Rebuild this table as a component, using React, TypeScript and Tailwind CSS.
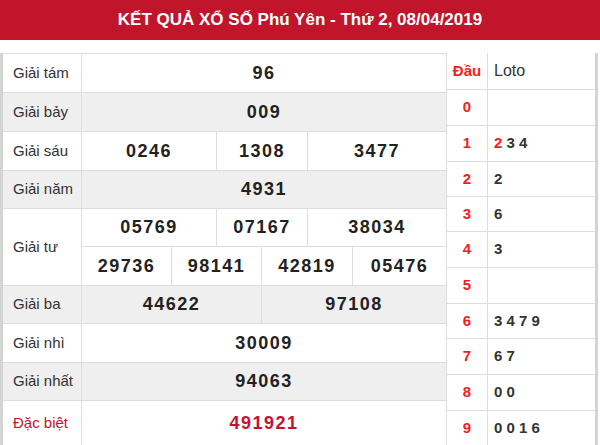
import React from 'react';

type Cell = { value: string; w?: string };
type Row = { label: string; h: string; cells: Cell[]; gray?: boolean; special?: boolean };

const font = { fontFamily: '"Liberation Sans", Arial, sans-serif' };

const ROWS: Row[] = [
  { label: 'Giải tám', h: 'h-[39px]', cells: [{ value: '96' }] },
  { label: 'Giải bảy', h: 'h-[39px]', cells: [{ value: '009' }], gray: true },
  {
    label: 'Giải sáu',
    h: 'h-[39px]',
    cells: [
      { value: '0246', w: 'w-[135px]' },
      { value: '1308', w: 'w-[91px]' },
      { value: '3477' },
    ],
  },
  { label: 'Giải năm', h: 'h-[38px]', cells: [{ value: '4931' }], gray: true },
];

const ROWS_AFTER: Row[] = [
  {
    label: 'Giải ba',
    h: 'h-[38px]',
    cells: [
      { value: '44622', w: 'w-[180px]' },
      { value: '97108' },
    ],
    gray: true,
  },
  { label: 'Giải nhì', h: 'h-[39px]', cells: [{ value: '30009' }] },
  { label: 'Giải nhất', h: 'h-[38px]', cells: [{ value: '94063' }], gray: true },
  { label: 'Đặc biệt', h: 'h-[45px]', cells: [{ value: '491921' }], special: true },
];

const LOTO = [
  { dau: '0', h: 'h-[36px]', nums: [] as string[] },
  { dau: '1', h: 'h-[36px]', nums: ['2', '3', '4'], redFirst: true },
  { dau: '2', h: 'h-[35px]', nums: ['2'] },
  { dau: '3', h: 'h-[35px]', nums: ['6'] },
  { dau: '4', h: 'h-[36px]', nums: ['3'] },
  { dau: '5', h: 'h-[36px]', nums: [] },
  { dau: '6', h: 'h-[35px]', nums: ['3', '4', '7', '9'] },
  { dau: '7', h: 'h-[36px]', nums: ['6', '7'] },
  { dau: '8', h: 'h-[36px]', nums: ['0', '0'] },
  { dau: '9', h: 'h-[35px]', nums: ['0', '0', '1', '6'] },
];

function Value({ v, w, last, special }: { v: string; w?: string; last?: boolean; special?: boolean }) {
  return (
    <div
      className={`${w ?? 'flex-1'} flex items-center justify-center text-[18px] font-bold tracking-[1.5px] ${
        last ? '' : 'border-r border-[#dddddd]'
      } ${special ? 'text-[#c8102e]' : 'text-[#222222]'}`}
    >
      {v}
    </div>
  );
}

function PrizeRow({ row }: { row: Row }) {
  return (
    <div className={`flex ${row.h} border-b border-[#dddddd] ${row.gray ? 'bg-[#efefef]' : 'bg-white'}`}>
      <div
        className={`w-[79px] shrink-0 flex items-center pl-[10px] text-[15px] border-r border-[#dddddd] ${
          row.special ? 'text-[#c8102e]' : 'text-[#333333]'
        }`}
      >
        {row.label}
      </div>
      <div className="flex flex-1">
        {row.cells.map((c, i) => (
          <Value key={i} v={c.value} w={c.w} last={i === row.cells.length - 1} special={row.special} />
        ))}
      </div>
    </div>
  );
}

export default function App() {
  return (
    <div className="w-[600px] h-[445px] overflow-hidden bg-white" style={font}>
      {/* Title bar */}
      <div className="h-[40px] bg-[#c0152a] flex items-center justify-center">
        <h1 className="text-white text-[17px] font-bold">KẾT QUẢ XỔ SỐ Phú Yên - Thứ 2, 08/04/2019</h1>
      </div>

      <div className="mt-[13px] flex">
        {/* Prize table */}
        <div className="w-[446px] border-l-[3px] border-t border-[#dddddd] border-l-[#d4d4d4] flex flex-col">
          {ROWS.map((r) => (
            <PrizeRow key={r.label} row={r} />
          ))}

          {/* Giai tu: two sub rows */}
          <div className="flex h-[77px] border-b border-[#dddddd] bg-white">
            <div className="w-[79px] shrink-0 flex items-center pl-[10px] text-[15px] text-[#333333] border-r border-[#dddddd]">
              Giải tư
            </div>
            <div className="flex flex-1 flex-col">
              <div className="flex h-[38px] border-b border-[#dddddd]">
                <Value v="05769" w="w-[135px]" />
                <Value v="07167" w="w-[91px]" />
                <Value v="38034" last />
              </div>
              <div className="flex flex-1">
                <Value v="29736" w="w-[90px]" />
                <Value v="98141" w="w-[90px]" />
                <Value v="42819" w="w-[91px]" />
                <Value v="05476" last />
              </div>
            </div>
          </div>

          {ROWS_AFTER.map((r) => (
            <PrizeRow key={r.label} row={r} />
          ))}
        </div>

        {/* Loto table */}
        <div className="w-[152px] border-l border-[#dddddd] border-r-[3px] border-r-[#d4d4d4] flex flex-col">
          <div className="flex h-[37px] border-b border-[#dddddd]">
            <div className="w-[41px] shrink-0 flex items-center justify-center border-r border-[#dddddd] text-[15px] font-bold text-[#ff1a1a]">
              Đầu
            </div>
            <div className="flex-1 flex items-center pl-[6px] text-[16px] text-[#333333]">Loto</div>
          </div>
          {LOTO.map((l) => (
            <div key={l.dau} className={`flex ${l.h} border-b border-[#dddddd]`}>
              <div className="w-[41px] shrink-0 flex items-center justify-center border-r border-[#dddddd] text-[15px] font-bold text-[#ff1a1a]">
                {l.dau}
              </div>
              <div className="flex-1 flex items-center pl-[6px] text-[15px] font-bold text-[#333333] whitespace-pre">
                {l.nums.map((n, i) => (
                  <span key={i} className={i === 0 && l.redFirst ? 'text-[#ff1a1a]' : ''}>
                    {i > 0 ? ' ' : ''}
                    {n}
                  </span>
                ))}
              </div>
            </div>
          ))}
        </div>
      </div>
    </div>
  );
}
